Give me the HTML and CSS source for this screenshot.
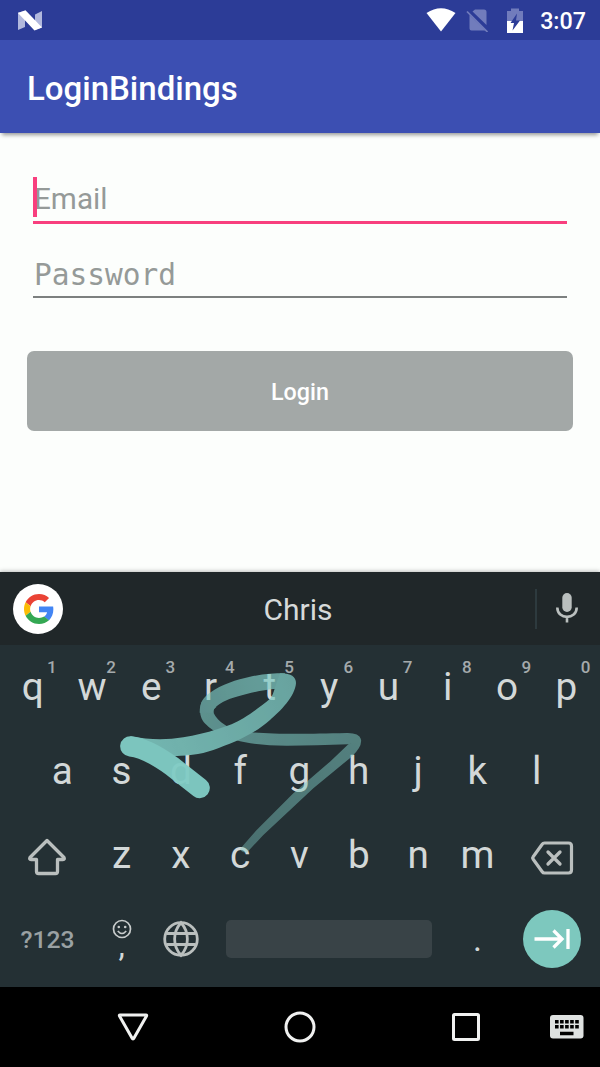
FILE: index.html
```html
<!DOCTYPE html>
<html lang="en">
<head>
<meta charset="utf-8">
<title>LoginBindings</title>
<link rel="stylesheet" href="styles.css">
</head>
<body>
<div class="screen">
  <header class="status-bar">
    <svg class="nougat" width="26" height="22" viewBox="0 0 26 22"><path d="M1 2.5 8 1V17L1 20ZM18 4.5 25 1V17.5L18 20Z" fill="#b1b8dd"/><path d="M1 3 8.500 .3 25 17.500 17.500 20.500Z" fill="#fff"/></svg>
    <div class="status-icons">
      <svg width="30" height="24" viewBox="0 0 30 24"><path d="M.5 5Q15-4.500 29.500 5L15 23.500Z" fill="#fff"/></svg>
      <svg class="sim" width="24" height="24" viewBox="0 0 24 24"><path d="M9 1.500H18Q20.500 1.500 20.500 4V17L6.500 3.500ZM3.500 7 19.500 22.500H5.500Q3.500 22.500 3.500 20.500Z" fill="#717cbc"/><path d="M1 3.500 21.500 24" stroke="#717cbc" stroke-width="1.700"/></svg>
      <svg class="battery" width="16" height="25" viewBox="0 0 16 25"><path d="M0 3H4V.5H12V3H16V13H0Z" fill="#717cbc"/><path d="M0 13H16V25H0Z" fill="#fff"/><path d="M10 5.500 3.500 15H7L5.500 22.500 13 12.500H9Z" fill="#2c3c97"/></svg>
      <span class="clock">3:07</span>
    </div>
  </header>
  <div class="app-bar"><h1>LoginBindings</h1></div>
  <main class="content">
    <div class="field email"><span class="caret"></span>Email</div>
    <div class="field password">Password</div>
    <div class="login">Login</div>
  </main>
  <section class="keyboard">
    <div class="suggestions">
      <div class="google"><svg width="30" height="30" viewBox="0 0 48 48"><path fill="#ea4335" d="M24 9.500c3.540 0 6.710 1.220 9.210 3.600l6.850-6.850C35.900 2.380 30.470 0 24 0 14.620 0 6.510 5.380 2.560 13.220l7.980 6.190C12.430 13.720 17.740 9.500 24 9.500z"/><path fill="#4285f4" d="M46.980 24.550c0-1.570-.15-3.090-.38-4.550H24v9.020h12.940c-.58 2.960-2.260 5.480-4.780 7.180l7.730 6c4.510-4.180 7.090-10.360 7.090-17.650z"/><path fill="#fbbc05" d="M10.530 28.590c-.48-1.450-.76-2.990-.76-4.590s.27-3.140.76-4.590l-7.980-6.190C.92 16.460 0 20.120 0 24s.92 7.540 2.560 10.780z"/><path fill="#34a853" d="M24 48c6.480 0 11.930-2.130 15.890-5.810l-7.730-6c-2.150 1.450-4.920 2.300-8.160 2.300-6.260 0-11.570-4.220-13.470-9.910l-7.980 6.190C6.510 42.620 14.620 48 24 48z"/></svg></div>
      <div class="word">Chris</div>
      <div class="mic"><svg width="24" height="32" viewBox="0 0 24 32"><rect x="7.300" y="1" width="9.400" height="19" rx="4.700" fill="#babfbe"/><path d="M2.300 15.500C2.300 28 21.700 28 21.700 15.500M12 24V30.500" fill="none" stroke="#babfbe" stroke-width="2.600"/></svg></div>
    </div>
    <div class="keys">
      <div class="row">
        <div class="key">q<sup>1</sup></div><div class="key">w<sup>2</sup></div><div class="key">e<sup>3</sup></div><div class="key">r<sup>4</sup></div><div class="key">t<sup>5</sup></div><div class="key">y<sup>6</sup></div><div class="key">u<sup>7</sup></div><div class="key">i<sup>8</sup></div><div class="key">o<sup>9</sup></div><div class="key">p<sup>0</sup></div>
      </div>
      <div class="row inset">
        <div class="key">a</div><div class="key">s</div><div class="key">d</div><div class="key">f</div><div class="key">g</div><div class="key">h</div><div class="key">j</div><div class="key">k</div><div class="key">l</div>
      </div>
      <div class="row">
        <div class="key wide"><svg class="shift" width="40" height="38" viewBox="0 0 40 38"><path d="M20 2.500 37 19.500Q38 21.500 36 21.500H30.500V33.500Q30.500 35.500 28.500 35.500H11.500Q9.500 35.500 9.500 33.500V21.500H4Q2 21.500 3 19.500Z" fill="none" stroke="#babfbe" stroke-width="3.300" stroke-linejoin="round"/></svg></div>
        <div class="key">z</div><div class="key">x</div><div class="key">c</div><div class="key">v</div><div class="key">b</div><div class="key">n</div><div class="key">m</div>
        <div class="key wide"><svg class="delete" width="44" height="36" viewBox="0 0 44 36"><path d="M14.500 3H38.500Q41.500 3 41.500 6V30Q41.500 33 38.500 33H14.500Q13 33 12 31.500L3 19Q2.200 18 3 17L12 4.500Q13 3 14.500 3Z" fill="none" stroke="#babfbe" stroke-width="3.200"/><path d="M18 12 30 24M30 12 18 24" stroke="#babfbe" stroke-width="3.300" stroke-linecap="round"/></svg></div>
      </div>
      <div class="row">
        <div class="key wide symbols">?123</div>
        <div class="key comma"><svg width="20" height="20" viewBox="0 0 20 20"><circle cx="10" cy="10" r="8.500" fill="none" stroke="#c8cccc" stroke-width="1.700"/><circle cx="6.800" cy="8" r="1.300" fill="#c8cccc"/><circle cx="13.200" cy="8" r="1.300" fill="#c8cccc"/><path d="M5.800 12Q10 17 14.200 12" fill="none" stroke="#c8cccc" stroke-width="1.700"/></svg><span>,</span></div>
        <div class="key"><svg width="38" height="38" viewBox="0 0 38 38"><g fill="none" stroke="#babfbe" stroke-width="2.800"><circle cx="19" cy="19" r="16.300"/><path d="M19 2.700C10.500 12 10.500 26 19 35.300C27.500 26 27.500 12 19 2.700ZM4.500 13.500H33.500M4.500 24.500H33.500"/></g></svg></div>
        <div class="key space"><span></span></div>
        <div class="key dot">.</div>
        <div class="key wide"><div class="next"><svg width="38" height="24" viewBox="0 0 38 24"><path d="M1.500 12H29M20.500 3.500 29 12 20.500 20.500M35 2V22" fill="none" stroke="#fff" stroke-width="3.300"/></svg></div></div>
      </div>
    </div>
    <svg class="trail" width="280" height="220" viewBox="0 0 840 660">
      <defs>
        <linearGradient id="rise" gradientUnits="userSpaceOnUse" x1="430" y1="600" x2="765" y2="270"><stop stop-color="#696969"/><stop offset="1" stop-color="#858585"/></linearGradient>
        <linearGradient id="loop" gradientUnits="userSpaceOnUse" x1="770" y1="260" x2="300" y2="180"><stop stop-color="#858585"/><stop offset="1" stop-color="#a0a0a0"/></linearGradient>
        <linearGradient id="top" gradientUnits="userSpaceOnUse" x1="300" y1="190" x2="550" y2="90"><stop stop-color="#a0a0a0"/><stop offset="1" stop-color="#b8b8b8"/></linearGradient>
        <linearGradient id="fall" gradientUnits="userSpaceOnUse" x1="570" y1="90" x2="90" y2="290"><stop stop-color="#bebebe"/><stop offset="1" stop-color="#dedede"/></linearGradient>
        <mask id="gesture" maskUnits="userSpaceOnUse" x="0" y="0" width="840" height="660">
          <path fill="url(#rise)" d="M420 597 470 540 580 430 690 335 745 283 783 268Q787 290 755 320L640 415 490 555 440 608Q424 608 420 597Z"/>
          <path fill="url(#loop)" d="M745 283C680 285 620 287 560 287C500 287 450 282 405 270C360 255 335 240 320 225C299 209 296 180 305 155L350 170C338 178 338 184 343 193C350 207 365 219 380 228C400 242 430 246 455 247C520 252 600 253 740 249Q777 248 783 268Q780 278 745 283Z"/>
          <path fill="url(#top)" d="M299 188C300 155 309 143 330 128C365 102 410 89 450 80C490 72 520 70 555 70L540 116 520 117C480 120 400 140 370 155C350 166 338 176 341 188Z"/>
          <path fill="url(#fall)" d="M540 70Q588 69 588 100C585 140 540 185 510 210C460 255 400 278 340 300C300 314 260 318 200 319L91 300V259C150 270 200 270 250 262C320 250 390 230 430 205C470 180 500 155 512 145C522 130 526 105 540 70Z"/>
          <path fill="none" stroke="#f5f5f5" stroke-width="61" stroke-linecap="round" d="M91 289Q140 294 215 348L299 414"/>
        </mask>
      </defs>
      <path mask="url(#gesture)" fill="#80cbc4" d="M0 0H840V660H0Z"/>
    </svg>
  </section>
  <nav class="nav-bar">
    <svg width="34" height="32" viewBox="0 0 34 32"><path d="M4 4H30Q31 4 30.500 5L18 27Q17 29 16 27L3.500 5Q3 4 4 4Z" fill="none" stroke="#f0f1f0" stroke-width="3"/></svg>
    <svg width="34" height="34" viewBox="0 0 34 34"><circle cx="17" cy="17" r="14" fill="none" stroke="#f0f1f0" stroke-width="3"/></svg>
    <svg width="32" height="32" viewBox="0 0 32 32"><rect x="3.500" y="3.500" width="25" height="25" rx="1" fill="none" stroke="#f0f1f0" stroke-width="3"/></svg>
    <svg class="ime" width="34" height="24" viewBox="0 0 34 24"><rect width="33.500" height="23.500" rx="3" fill="#dfe2e1"/><path d="M5 6.700H29M5 11.700H29" stroke="#000" stroke-width="3.600" stroke-dasharray="3.600 1.450"/><path d="M10 18.500H23.500" stroke="#000" stroke-width="3.500"/></svg>
  </nav>
</div>
</body>
</html>
```
FILE: styles.css
```css
body { margin: 0; font-family: Roboto, sans-serif; }
.screen { width: 600px; height: 1067px; display: flex; flex-direction: column; background: #fcfefc; overflow: hidden; }
svg { display: block; flex: none; }
.status-bar { height: 40px; flex: none; box-sizing: border-box; padding: 0 14px 0 17px; background: #2c3c97; display: flex; align-items: center; justify-content: space-between; }
.nougat { margin-top: 1px; }
.status-icons { display: flex; align-items: center; }
.sim { margin-left: 10px; }
.battery { margin-left: 17px; }
.clock { margin-left: 17px; color: #fff; font-size: 23.3px; font-weight: 500; line-height: 28px; padding-top: 2px; }
.app-bar { height: 93px; flex: none; padding-left: 27px; background: #3c4fb2; display: flex; align-items: center; box-shadow: 0 4px 4px -2px rgba(0,0,0,.4); }
h1 { margin: 4px 0 0; color: #fff; font-size: 33px; font-weight: 500; line-height: 40px; }
.content { flex: 1; padding: 43px 27px 0; }
.field { position: relative; margin: 0 6px; box-sizing: border-box; color: #959a98; font-size: 30px; line-height: 46px; padding-left: 1px; }
.email { height: 48px; border-bottom: 3px solid #f83f7e; font-size: 29.700px; }
.caret { position: absolute; left: 0; top: 1px; width: 4px; height: 40px; background: #f83f7e; }
.password { height: 74px; padding-top: 28px; border-bottom: 2px solid #7c807f; font-family: "DejaVu Sans Mono", monospace; font-size: 29.500px; }
.login { height: 80px; margin-top: 53px; border-radius: 7px; background: #a3a8a7; color: #fff; font-size: 23.300px; font-weight: 500; line-height: 82px; text-align: center; }
.keyboard { position: relative; height: 415px; flex: none; background: #243034; box-shadow: 0 -1px 4px rgba(0,0,0,.25); }
.suggestions { height: 73px; background: #202729; display: flex; align-items: center; color: #d6dada; }
.google { width: 50px; height: 50px; margin-left: 13px; border-radius: 50%; background: #fff; display: flex; align-items: center; justify-content: center; }
.google svg { margin-left: 1px; }
.word { flex: 1; padding-right: 2px; font-size: 30px; text-align: center; line-height: 40px; padding-top: 3px; }
.mic { box-sizing: border-box; width: 65px; height: 40px; padding-right: 3px; border-left: 2px solid #2d3a3e; display: flex; align-items: center; justify-content: center; }
.mic svg { margin-top: -2px; }
.keys { height: 342px; padding: 0 4px 0 3px; }
.row { height: 84px; display: flex; }
.inset { padding: 0 29.650px; }
.key { flex: 1 1 0; min-width: 0; position: relative; display: flex; align-items: center; justify-content: center; color: #d3d8d8; font-size: 38.700px; line-height: 48px; }
.wide { flex-grow: 1.5; }
.key sup { position: absolute; left: 44px; top: 12px; color: #a4aaac; font-size: 17px; font-weight: 500; line-height: 20px; }
.symbols { color: #9aa1a3; font-size: 24.700px; font-weight: 500; padding-top: 2px; box-sizing: border-box; }
.shift { margin-top: 3px; }
.delete { margin-top: 6px; }
.comma { flex-direction: column; font-size: 32px; }
.comma span { line-height: 24px; margin-top: -6px; padding-bottom: 2px; }
.dot { font-size: 34px; }
.space { flex-grow: 4; }
.space span { flex: 1; height: 38px; margin: 0 15.500px; border-radius: 5px; background: #394347; }
.next { width: 58px; height: 58px; border-radius: 50%; background: #7dc8be; display: flex; align-items: center; justify-content: center; }
.trail { position: absolute; left: 100px; top: 78px; }
.nav-bar { height: 80px; flex: none; background: #000; display: flex; align-items: center; padding-left: 116px; gap: 133px; }
.nav-bar .ime { margin-left: -65px; }
```
